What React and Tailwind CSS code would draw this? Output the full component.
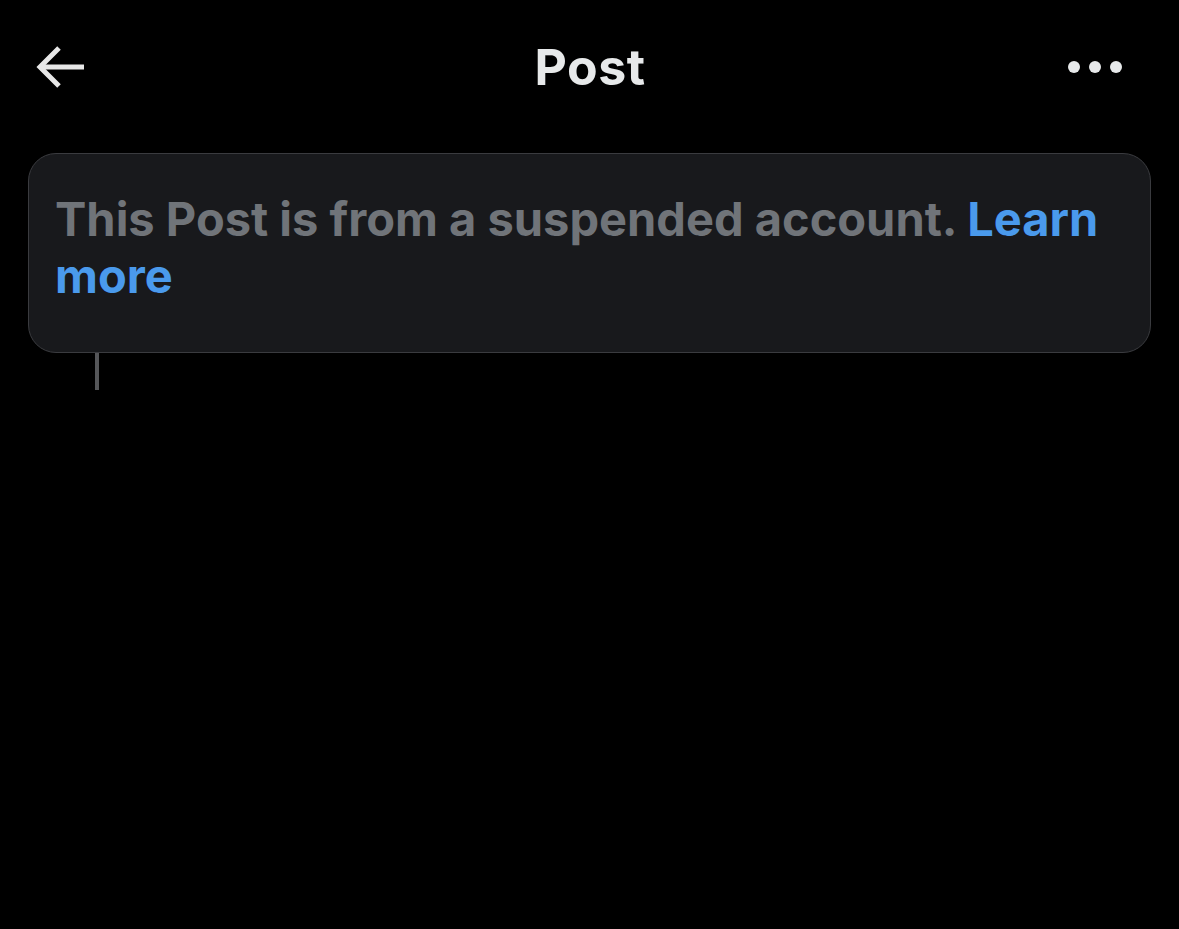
export default function App() {
  return (
    <div className="min-h-screen w-full bg-black" style={{ fontFamily: "Inter, 'Noto Sans', sans-serif" }}>
      {/* header */}
      <div className="flex h-[132px] items-center justify-between px-[34px] pt-[2px]">
        <svg width="54" height="46" viewBox="0 0 54 46" fill="none" stroke="#e7e7e7" strokeWidth="5">
          <path d="M50 23H6" />
          <path d="M25 4L6 23l19 19" />
        </svg>
        <h1 className="pl-[24px] text-[50px] font-bold tracking-[0.5px] text-[#e7e9ea]">Post</h1>
        <div className="flex items-center gap-[9px] pr-[23px]">
          <span className="h-[12px] w-[12px] rounded-full bg-[#e7e9ea]" />
          <span className="h-[12px] w-[12px] rounded-full bg-[#e7e9ea]" />
          <span className="h-[12px] w-[12px] rounded-full bg-[#e7e9ea]" />
        </div>
      </div>

      {/* suspended notice */}
      <div className="px-[28px] pt-[21px]">
        <div className="rounded-[28px] border border-[#3a3b3f] bg-[#18191c] px-[26px] pt-[36px] pb-[48px]">
          <p className="text-[47px] font-bold leading-[57px] text-[#707479]">
            This Post is from a suspended account.{" "}
            <a href="#" className="text-[#4a9aec]">Learn more</a>
          </p>
        </div>
        <div className="ml-[67px] h-[37px] w-[4px] bg-[#555659]" />
      </div>
    </div>
  );
}
